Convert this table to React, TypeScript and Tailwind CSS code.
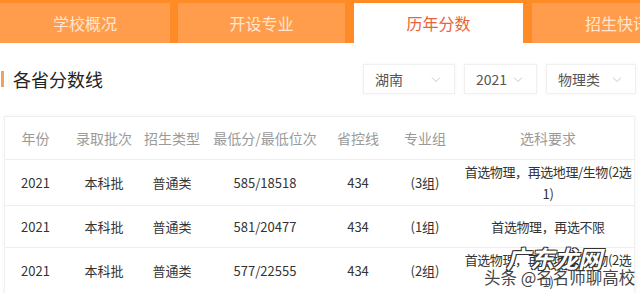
import React from "react";

const font = { fontFamily: '"Noto Sans CJK SC", "Microsoft YaHei", "Noto Sans", sans-serif' };

function Chevron() {
  return (
    <svg width="10" height="7" viewBox="0 0 10 7" className="shrink-0">
      <path d="M1 1.5 L5 5.5 L9 1.5" fill="none" stroke="#c8c8c8" strokeWidth="1" />
    </svg>
  );
}

function Select({ label, w }: { label: string; w: string }) {
  return (
    <div className={`${w} h-[30px] flex items-center pl-[11px] pr-[13px] border border-[#f0f0f0] shadow-[0_0_3px_rgba(0,0,0,0.05)] bg-white`}>
      <span className="text-[14px] text-[#555] leading-none">{label}</span>
      <div className="flex-1 flex justify-end">
        <Chevron />
      </div>
    </div>
  );
}

const cols = ["w-[61px]", "w-[76px]", "w-[60px]", "w-[126px]", "w-[60px]", "w-[74px]", "w-[172px]"];

function Row({ cells, h, header }: { cells: React.ReactNode[]; h: string; header?: boolean }) {
  return (
    <div className={`flex ${h} items-center border-b border-[#eeeeee]`}>
      {cells.map((c, i) => (
        <div
          key={i}
          className={`${cols[i]} shrink-0 text-center ${header ? "text-[14px] text-[#9a9a9a]" : "text-[13px] text-[#333]"} ${i === 6 && !header ? "tracking-[-0.4px]" : ""} leading-[22px]`}
        >
          {c}
        </div>
      ))}
    </div>
  );
}

export default function App() {
  return (
    <div className="w-[640px] h-[293px] overflow-hidden bg-white relative" style={font}>
      {/* tabs */}
      <div className="h-[43px] bg-[#ff8b26] pt-[3px] flex overflow-hidden">
        <div className="w-[170px] shrink-0 bg-[#ff9d4c] flex items-center justify-center text-[16px] text-[#ffe6d0]">学校概况</div>
        <div className="w-[167px] ml-[8px] shrink-0 bg-[#ff9d4c] flex items-center justify-center text-[16px] text-[#ffe6d0]">开设专业</div>
        <div className="w-[169px] ml-[9px] shrink-0 bg-white flex items-center justify-center text-[16px] text-[#e8643a]">历年分数</div>
        <div className="w-[170px] ml-[9px] shrink-0 bg-[#ff9d4c] flex items-center justify-center text-[16px] text-[#ffe6d0] whitespace-nowrap">招生快讯</div>
      </div>

      {/* title + selects */}
      <div className="flex items-center h-[30px] mt-[21px]">
        <div className="flex items-center">
          <div className="w-[3px] h-[16px] bg-[#f0a060] ml-[1px]" />
          <div className="ml-[9px] text-[18px] text-[#222] leading-none">各省分数线</div>
        </div>
        <div className="ml-auto mr-[4px] flex gap-[9px]">
          <Select label="湖南" w="w-[92px]" />
          <Select label="2021" w="w-[73px]" />
          <Select label="物理类" w="w-[90px]" />
        </div>
      </div>

      {/* table card */}
      <div className="ml-[4px] mr-[5px] mt-[22px] border border-[#f0f0f0] shadow-[0_0_4px_rgba(0,0,0,0.05)]">
        <Row h="h-[43px]" header cells={["年份", "录取批次", "招生类型", "最低分/最低位次", "省控线", "专业组", "选科要求"]} />
        <Row h="h-[46px]" cells={["2021", "本科批", "普通类", "585/18518", "434", "(3组)", "首选物理，再选地理/生物(2选1)"]} />
        <Row h="h-[42px]" cells={["2021", "本科批", "普通类", "581/20477", "434", "(1组)", "首选物理，再选不限"]} />
        <Row h="h-[46px]" cells={["2021", "本科批", "普通类", "577/22555", "434", "(2组)", "首选物理，再选地理/生物(2选1)"]} />
      </div>

      {/* watermark */}
      <div className="absolute left-[484px] top-[269px] whitespace-nowrap text-[16.5px] text-[#444] leading-none [text-shadow:0_0_2px_#fff,0_0_2px_#fff]">
        头条 @名名师聊高校
      </div>
      <div className="absolute left-[506px] top-[246px] whitespace-nowrap text-[24px] font-bold italic text-white leading-none [text-shadow:1px_1px_0_#333,-1px_-1px_0_#333,1px_-1px_0_#333,-1px_1px_0_#333]">
        广东龙网
      </div>
    </div>
  );
}
